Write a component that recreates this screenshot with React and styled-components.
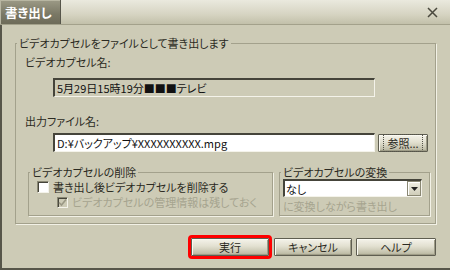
import styled, { createGlobalStyle } from "styled-components";

const GlobalStyle = createGlobalStyle`
  html, body {
    margin: 0;
    padding: 0;
    background: #cdcbb6;
  }
  body {
    font-family: "Noto Sans CJK JP", sans-serif;
    font-size: 11px;
    color: #2b2a22;
    font-feature-settings: "palt";
  }
  * { box-sizing: border-box; }
`;

const Window = styled.div`
  width: 450px;
  height: 270px;
  display: flex;
  flex-direction: column;
  background: #cdcbb6;
`;

const TitleBar = styled.div`
  height: 25px;
  display: flex;
  align-items: stretch;
  justify-content: space-between;
  background: linear-gradient(#eae9de, #d6d4c2 60%, #c2c0aa);
  border-bottom: 1px solid #a3a18b;
`;

const TitleTab = styled.div`
  width: 61px;
  padding-left: 5px;
  display: flex;
  align-items: center;
  color: #fff;
  font-size: 12.5px;
  font-weight: bold;
  white-space: nowrap;
  background: linear-gradient(#9c9a86, #7a7865 60%, #6d6b59);
  border-right: 1px solid #56554a;
  box-shadow: inset 1px 1px 0 #b8b6a2;
`;

const CloseButton = styled.div`
  width: 24px;
  margin-right: 6px;
  display: flex;
  align-items: center;
  justify-content: center;
`;

const Body = styled.div`
  flex: 1;
  padding: 11px 14px 0 13px;
  border-left: 2px solid #57564a;
  border-bottom: 2px solid #57564a;
`;

const Group = styled.fieldset`
  margin: 0;
  padding: 0;
  min-width: 0;
  border: 1px solid #a3a18c;
  box-shadow: 1px 1px 0 #f2f1e6;
  width: ${(p) => p.$width}px;
  height: ${(p) => p.$height}px;
`;

const Legend = styled.legend`
  padding: 0 2px;
  margin-left: 1px;
  line-height: 14px;
  font-size: 11px;
  color: #2b2a22;
  white-space: nowrap;
`;

const MainInner = styled.div`
  padding: 5px 5px 0 9px;
`;

const Label = styled.div`
  line-height: 14px;
  margin-top: ${(p) => p.$top || 0}px;
`;

const TextField = styled.div`
  height: 19px;
  width: 322px;
  padding-left: 2px;
  display: flex;
  align-items: center;
  white-space: nowrap;
  overflow: hidden;
  color: #111;
  background: ${(p) => (p.$readOnly ? "#cdcbb6" : "#fff")};
  border-style: solid;
  border-width: 2px 1px 1px 2px;
  border-color: #45443a #f4f3ea #f4f3ea #45443a;
`;

const FieldIndent = styled.div`
  margin-left: 28px;
  margin-top: ${(p) => p.$top}px;
  display: flex;
  align-items: center;
  gap: 3px;
`;

const Button = styled.button`
  width: ${(p) => p.$width}px;
  height: 18px;
  padding: 0;
  font-family: inherit;
  font-size: 11px;
  font-feature-settings: "palt";
  color: #2b2a22;
  border: 1px solid #5f5e51;
  border-radius: 1px;
  background: linear-gradient(#f4f3ea, #e2e0d0 45%, #c4c2ad 85%, #b3b19b);
  box-shadow: inset 1px 1px 0 #fbfaf3, inset -1px -1px 0 #9e9c87;
  outline: ${(p) => (p.$marked ? "3px solid #f00" : "none")};
  margin-right: ${(p) => (p.$marked ? 1 : 0)}px;
  line-height: 14px;
`;

const FocusText = styled.span`
  padding: 0 3px;
  outline: 1px dotted #55544a;
`;

const SubRow = styled.div`
  margin: 13px 0 0 3px;
  display: flex;
  gap: 6px;
`;

const SubInner = styled.div`
  padding: ${(p) => p.$pad};
`;

const CheckRow = styled.div`
  display: flex;
  align-items: center;
  height: 14px;
  line-height: 13px;
  gap: 4px;
  white-space: nowrap;
  margin-left: ${(p) => p.$indent || 0}px;
  margin-top: ${(p) => p.$top || 0}px;
  color: ${(p) => (p.$disabled ? "#a6a48f" : "#2b2a22")};
`;

const Box = styled.span`
  flex: none;
  width: ${(p) => (p.$disabled ? 11 : 12)}px;
  height: ${(p) => (p.$disabled ? 11 : 12)}px;
  display: flex;
  align-items: center;
  justify-content: center;
  background: ${(p) => (p.$disabled ? "#cdcbb6" : "#fff")};
  border: 1px solid;
  border-color: #8a8874 #f4f3ea #f4f3ea #8a8874;
  box-shadow: inset 1px 1px 0 #45443a;
`;

const Select = styled.div`
  width: 139px;
  height: 18px;
  display: flex;
  align-items: stretch;
  background: #fff;
  border-style: solid;
  border-width: 2px 1px 1px 2px;
  border-color: #45443a #f4f3ea #f4f3ea #45443a;
`;

const SelectValue = styled.div`
  flex: 1;
  padding-left: 1px;
  display: flex;
  align-items: center;
  color: #111;
`;

const SelectArrow = styled.div`
  width: 14px;
  display: flex;
  align-items: center;
  justify-content: center;
  background: linear-gradient(#f0efe4, #cfcdb9);
  border: 1px solid #8a8874;
  box-shadow: inset 1px 1px 0 #fff;
`;

const Hint = styled.div`
  margin-top: 2px;
  line-height: 14px;
  white-space: nowrap;
  color: #a6a48f;
`;

const ButtonRow = styled.div`
  margin-top: 14px;
  display: flex;
  justify-content: flex-end;
  gap: 4px;
`;

const Check = () => (
  <svg width="9" height="9" viewBox="0 0 9 9">
    <path d="M1 4.5 L3.5 7 L8 1.5" fill="none" stroke="#9a9884" strokeWidth="1.6" />
  </svg>
);

export default function App() {
  return (
    <>
      <GlobalStyle />
      <Window>
        <TitleBar>
          <TitleTab>書き出し</TitleTab>
          <CloseButton>
            <svg width="11" height="11" viewBox="0 0 11 11">
              <path d="M1 1 L10 10 M10 1 L1 10" stroke="#4a493e" strokeWidth="1.5" />
            </svg>
          </CloseButton>
        </TitleBar>
        <Body>
          <Group $width={421} $height={188}>
            <Legend>ビデオカプセルをファイルとして書き出します</Legend>
            <MainInner>
              <Label>ビデオカプセル名:</Label>
              <FieldIndent $top={9}>
                <TextField $readOnly>5月29日15時19分■■■テレビ</TextField>
              </FieldIndent>
              <Label $top={17}>出力ファイル名:</Label>
              <FieldIndent $top={5}>
                <TextField>D:¥バックアップ¥XXXXXXXXXX.mpg</TextField>
                <Button $width={50}>
                  <FocusText>参照...</FocusText>
                </Button>
              </FieldIndent>
              <SubRow>
                <Group $width={245} $height={51}>
                  <Legend>ビデオカプセルの削除</Legend>
                  <SubInner $pad="1px 0 0 8px">
                    <CheckRow>
                      <Box />
                      書き出し後ビデオカプセルを削除する
                    </CheckRow>
                    <CheckRow $indent={20} $top={1} $disabled>
                      <Box $disabled>
                        <Check />
                      </Box>
                      ビデオカプセルの管理情報は残しておく
                    </CheckRow>
                  </SubInner>
                </Group>
                <Group $width={151} $height={51}>
                  <Legend>ビデオカプセルの変換</Legend>
                  <SubInner $pad="0 0 0 3px">
                    <Select>
                      <SelectValue>なし</SelectValue>
                      <SelectArrow>
                        <svg width="7" height="4" viewBox="0 0 7 4">
                          <path d="M0 0 H7 L3.5 4 Z" fill="#222" />
                        </svg>
                      </SelectArrow>
                    </Select>
                    <Hint>に変換しながら書き出し</Hint>
                  </SubInner>
                </Group>
              </SubRow>
            </MainInner>
          </Group>
          <ButtonRow>
            <Button $width={78} $marked>
              実行
            </Button>
            <Button $width={78}>キャンセル</Button>
            <Button $width={80}>ヘルプ</Button>
          </ButtonRow>
        </Body>
      </Window>
    </>
  );
}
